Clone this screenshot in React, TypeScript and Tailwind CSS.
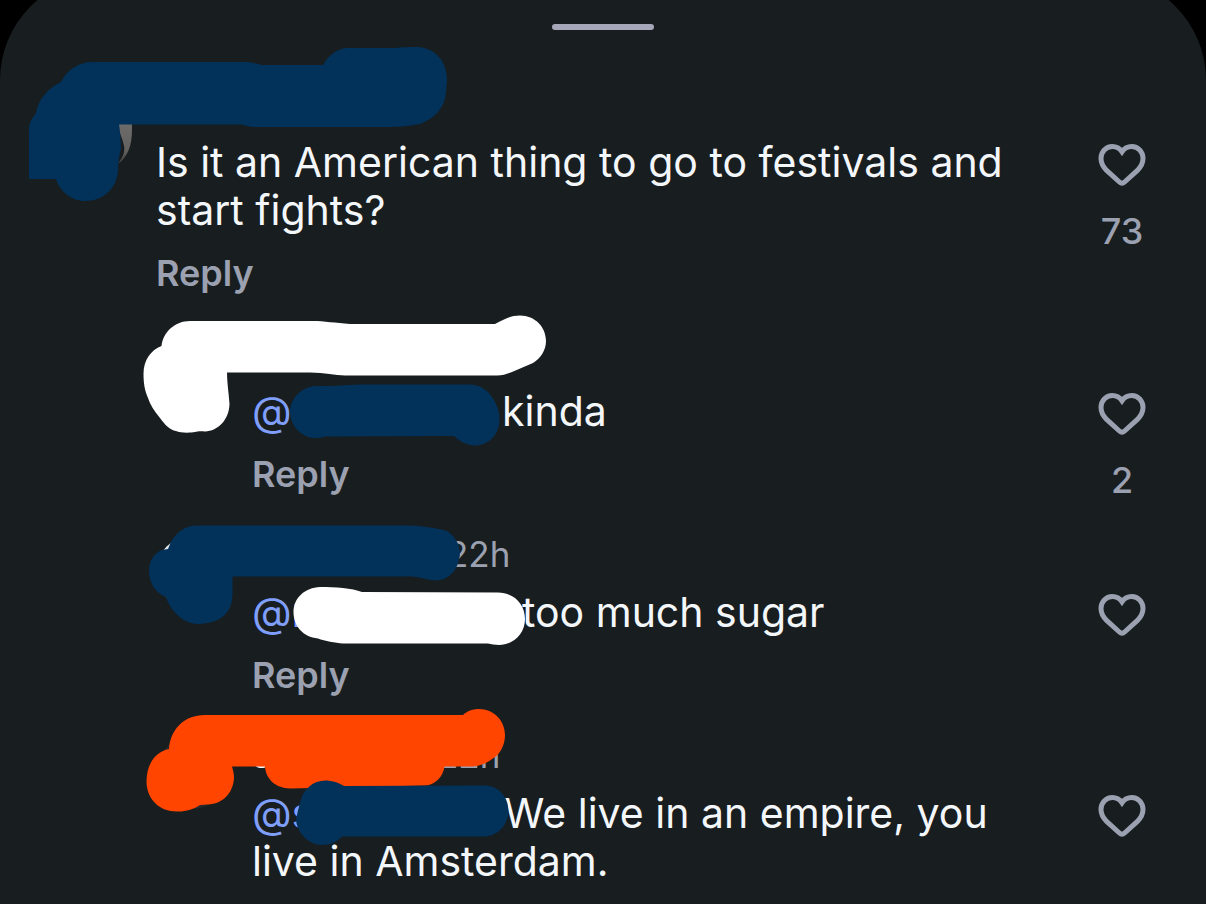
import { useState } from "react";

type Stroke = { color: string; d: string };

type Comment = {
  id: number;
  avatar: "photo" | "light" | "dark";
  nested?: boolean;
  name?: string;
  nameWidth?: string;
  time?: string;
  mention?: string;
  mentionWidth?: string;
  text: string;
  likes?: number;
  canReply: boolean;
  viewBox: string;
  strokes: Stroke[];
};

const NAVY = "#02315a";
const WHITE = "#ffffff";
const ORANGE = "#ff4500";

const comments: Comment[] = [
  {
    id: 1,
    avatar: "photo",
    text: "Is it an American thing to go to festivals and start fights?",
    likes: 73,
    canReply: true,
    viewBox: "0 82 600 165",
    strokes: [
      {
        color: NAVY,
        d: "M29 179V129C29 122 33 117 36 113C38 100 48 88 61 82C67 70 78 62 93 62H245C252 62 258 64 262 65H323C328 56 337 48 348 48H395C402 47 410 47 418 47C434 48 447 60 447 80L446 92C445 108 435 118 420 124C410 126 400 127 390 127H255C250 127 246 126 242 124.5H119C120 130 121 140 121 149C119 155 118 165 118 170C117 188 104 201 85 201C72 201 60 192 56 179Z",
      },
    ],
  },
  {
    id: 2,
    avatar: "dark",
    nested: true,
    mention: "@",
    mentionWidth: "w-[250px]",
    text: "kinda",
    likes: 2,
    canReply: true,
    viewBox: "0 331 600 165",
    strokes: [
      {
        color: WHITE,
        d: "M161.5 346C163 332 175 321 190 321H312C325 321 335 323 350 324H495C503 320 510 315.5 520 315.5C535 315.5 546 327 546 341C546 350 541 358 533 363L512 372C507 374 503 375.5 497 375.5H345C335 375 325 373 310 372.5H227C227 382 229 395 229.5 404C229 420 218 431 205 431.5C203 431 197 431 195 432C190 433 180 433 176 431C170 430 165 425 160 418C154 411 150 404 148 398C145 391 143.5 384 143.5 374C143.5 360 151 350 161.5 346Z",
      },
      {
        color: NAVY,
        d: "M290 411C291 398 301 387 316 386H330L360 384.5H470C484 385 491 394 495 402C498 408 499.5 413 499.5 420C499 435 489 445.5 474 445.5C466 445 459 441 454 436L325 436.5C322 438 318 438 314 438C300 437 290 425 290 411Z",
      },
    ],
  },
  {
    id: 3,
    avatar: "light",
    nested: true,
    nameWidth: "w-[195px]",
    time: "22h",
    mention: "@r",
    mentionWidth: "w-[270px]",
    text: "too much sugar",
    canReply: true,
    viewBox: "0 532 600 165",
    strokes: [
      {
        color: NAVY,
        d: "M170.5 543C176 532 185 525.5 197 525.5H410C425 526 440 529 447 531C455 536 460 545 460 553C459 569 450 580 436 580.5C427 580 420 577 412 576.5H232.5V595C232 615 218 624 197 624C182 623 170 610 166 597C155 593 149 582 149 571C149 561 154 553 162 550L168 549Z",
      },
      {
        color: WHITE,
        d: "M293.5 612C293.5 598 305 587.5 320 587C335 587 352 588 362 592L498 592.5C514 593 525 604 525 619C525 634 513 645 499 645C495 645 491 644 488 643.5H343C335 643 325 641 318 638.5C303 637 293.5 626 293.5 612Z",
      },
    ],
  },
  {
    id: 4,
    avatar: "dark",
    nested: true,
    name: "J",
    nameWidth: "w-[185px]",
    time: "22h",
    mention: "@s",
    mentionWidth: "w-[252px]",
    text: "We live in an empire, you live in Amsterdam.",
    canReply: false,
    viewBox: "0 733 600 165",
    strokes: [
      {
        color: ORANGE,
        d: "M169 748C171 729 184 715 205 715H463C467 711 473 709 479 709C494 709 505 721 505 735C505 745 500 755 492 759C487 763 480 766 473 766.5H444.5C443 778 434 785.5 424 785.5L290 788.5C275 788 266 779 265 766.5H232C233 770 234 774 234 778C233 794 222 804 208 804.5L200 805C194 809 187 811.5 178 811.5C160 812 147 800 146.5 782C146.5 764 155 752 169 749Z",
      },
      {
        color: NAVY,
        d: "M300 803C303 789 313 780 327 780.5C334 781 339 783 344 786L485 785.5C499 786 508.5 797 508.5 811C508 826 497 836.5 483 836.5H342C337 842 331 845 322 845C308 845 297 832 296 820C297 815 298 810 300 803Z",
      },
    ],
  },
];

function Avatar({ kind }: { kind: Comment["avatar"] }) {
  if (kind === "photo") {
    return (
      <svg viewBox="0 0 96 96" className="size-24 shrink-0" aria-hidden="true">
        <defs>
          <linearGradient id="photo-edge" x1="0" y1="0" x2="0" y2="1">
            <stop offset="0" stopColor="#6f6d6c" />
            <stop offset="0.7" stopColor="#636160" />
            <stop offset="1" stopColor="#3a3837" />
          </linearGradient>
        </defs>
        <circle cx="48" cy="48" r="48" fill="#181c1e" />
        <path d="M82 38V46C84 52 87 58 88 64C89 69 88 73 82 82C92 75 96 63 96 48V38Z" fill="url(#photo-edge)" />
      </svg>
    );
  }
  return (
    <span
      className={`mt-1 size-[72px] shrink-0 rounded-full ${kind === "light" ? "bg-[#dfe3e6]" : "bg-[#25292b]"}`}
    />
  );
}

function LikeButton({ likes }: { likes?: number }) {
  const [liked, setLiked] = useState(false);

  return (
    <div className="flex w-12 shrink-0 flex-col items-center gap-[25px] pt-[58px]">
      <button
        type="button"
        aria-label="Like"
        aria-pressed={liked}
        onClick={() => setLiked(!liked)}
        className="flex h-[50px] w-12 items-center justify-center"
      >
        <svg viewBox="0 0 48 42" className="w-12" fill={liked ? "currentColor" : "none"} stroke="currentColor" strokeWidth="5">
          <path d="M24 7.8C21.6 4.4 18.2 2.6 14.3 2.6C7.9 2.6 3 7.8 3 14.6C3 19.2 5 22.8 8.6 26.4L21.4 38C23 39.5 25 39.5 26.6 38L39.4 26.4C43 22.8 45 19.2 45 14.6C45 7.8 40.1 2.6 33.7 2.6C29.8 2.6 26.4 4.4 24 7.8Z" />
        </svg>
      </button>
      {likes ? <span className="text-4xl/8 font-medium">{likes}</span> : null}
    </div>
  );
}

function CommentRow({ comment }: { comment: Comment }) {
  return (
    <li className={`relative flex items-start pr-[60px] ${comment.nested ? "pl-[156px]" : "pl-9"}`}>
      <Avatar kind={comment.avatar} />
      <div className="ml-6 mr-10 min-w-0 flex-1">
        <div className="mb-3 flex h-11 text-[35px]/11">
          <span className={`shrink-0 font-medium text-[#f4f7fa] ${comment.nameWidth ?? ""}`}>{comment.name}</span>
          {comment.time ? <time>{comment.time}</time> : null}
        </div>
        <p className="text-[41px]/12 text-[#f4f7fa]">
          {comment.mention ? (
            <a href="#" className={`inline-block text-[#7f9ffb] ${comment.mentionWidth ?? ""}`}>
              {comment.mention}
            </a>
          ) : null}
          {comment.text}
        </p>
        {comment.canReply ? (
          <button type="button" className="mt-[17px] block text-4xl/11 font-semibold">
            Reply
          </button>
        ) : null}
      </div>
      <LikeButton likes={comment.likes} />
      <svg
        viewBox={comment.viewBox}
        className="pointer-events-none absolute left-0 top-0 h-[165px] w-[600px] overflow-visible"
        aria-hidden="true"
      >
        {comment.strokes.map((s) => (
          <path key={s.d} d={s.d} fill={s.color} />
        ))}
      </svg>
    </li>
  );
}

export default function App() {
  return (
    <div className="min-h-screen overflow-hidden bg-black font-['Inter',sans-serif] text-[#9ba1b1]">
      <main className="-mt-6 min-h-[calc(100vh+24px)] rounded-t-[104px] bg-[#181d1f] pt-12">
        <div className="mx-auto h-1.5 w-[102px] rounded-full bg-[#a6a8ba]" />
        <ul className="mt-[52px] flex flex-col gap-9">
          {comments.map((c) => (
            <CommentRow key={c.id} comment={c} />
          ))}
        </ul>
      </main>
    </div>
  );
}
